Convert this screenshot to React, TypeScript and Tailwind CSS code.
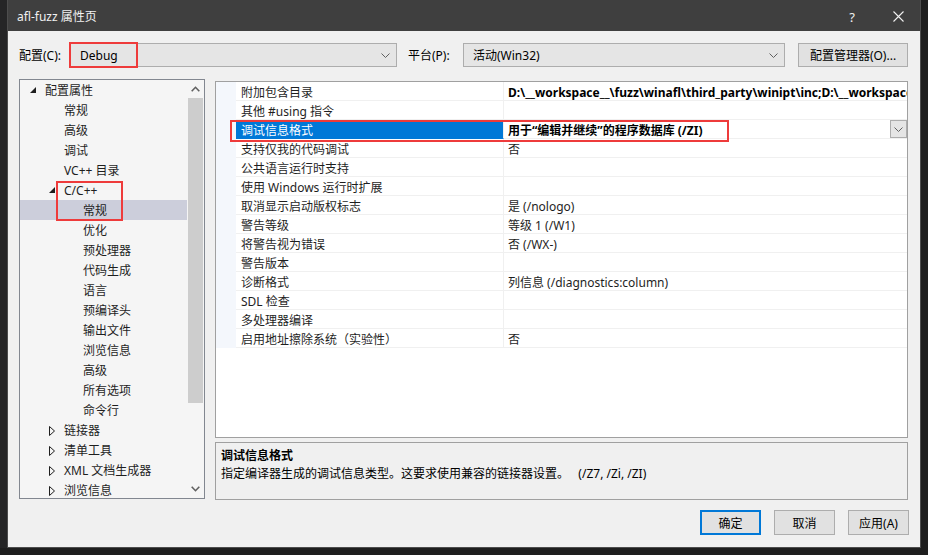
import React from 'react';

type TreeItem = { label: string; level: 0 | 1 | 2; arrow?: 'open' | 'closed'; selected?: boolean };

const tree: TreeItem[] = [
  { label: '配置属性', level: 0, arrow: 'open' },
  { label: '常规', level: 1 },
  { label: '高级', level: 1 },
  { label: '调试', level: 1 },
  { label: 'VC++ 目录', level: 1 },
  { label: 'C/C++', level: 1, arrow: 'open' },
  { label: '常规', level: 2, selected: true },
  { label: '优化', level: 2 },
  { label: '预处理器', level: 2 },
  { label: '代码生成', level: 2 },
  { label: '语言', level: 2 },
  { label: '预编译头', level: 2 },
  { label: '输出文件', level: 2 },
  { label: '浏览信息', level: 2 },
  { label: '高级', level: 2 },
  { label: '所有选项', level: 2 },
  { label: '命令行', level: 2 },
  { label: '链接器', level: 1, arrow: 'closed' },
  { label: '清单工具', level: 1, arrow: 'closed' },
  { label: 'XML 文档生成器', level: 1, arrow: 'closed' },
  { label: '浏览信息', level: 1, arrow: 'closed' },
];

const indent = { 0: 'pl-0', 1: 'pl-[19px]', 2: 'pl-[38px]' };

type Prop = { name: string; value: string; bold?: boolean; selected?: boolean };

const props: Prop[] = [
  { name: '附加包含目录', value: 'D:\\__workspace__\\fuzz\\winafl\\third_party\\winipt\\inc;D:\\__workspace__', bold: true },
  { name: '其他 #using 指令', value: '' },
  { name: '调试信息格式', value: '用于“编辑并继续”的程序数据库 (/ZI)', bold: true, selected: true },
  { name: '支持仅我的代码调试', value: '否' },
  { name: '公共语言运行时支持', value: '' },
  { name: '使用 Windows 运行时扩展', value: '' },
  { name: '取消显示启动版权标志', value: '是 (/nologo)' },
  { name: '警告等级', value: '等级 1 (/W1)' },
  { name: '将警告视为错误', value: '否 (/WX-)' },
  { name: '警告版本', value: '' },
  { name: '诊断格式', value: '列信息 (/diagnostics:column)' },
  { name: 'SDL 检查', value: '' },
  { name: '多处理器编译', value: '' },
  { name: '启用地址擦除系统（实验性）', value: '否' },
];

const Chevron = () => (
  <svg width="9" height="5" viewBox="0 0 9 5">
    <path d="M0.5 0.5 L4.5 4.5 L8.5 0.5" fill="none" stroke="#606060" strokeWidth="1" />
  </svg>
);

const Combo = ({ text, className }: { text: string; className: string }) => (
  <div
    className={`${className} h-[24px] flex items-center justify-between border border-[#adadad] bg-[#e5e5e5] pl-[9px] pr-[6px] text-[12px] text-black`}
  >
    <span className="pt-[2px]">{text}</span>
    <Chevron />
  </div>
);

const Button = ({ label, primary }: { label: string; primary?: boolean }) => (
  <div
    className={`w-[61px] h-[25px] flex items-center justify-center pt-[2px] bg-[#e1e1e1] text-[12px] text-black ${
      primary ? 'border-2 border-[#0078d7]' : 'border border-[#adadad]'
    }`}
  >
    {label}
  </div>
);

export default function App() {
  return (
    <div className="w-[928px] h-[555px] overflow-hidden bg-[#1e1e1e] font-['Noto_Sans','Noto_Sans_CJK_SC',sans-serif] leading-[16px]">
      <div className="flex">
        <div className="w-[7px] h-[548px] bg-[#252526]" />
        <div className="w-[914px] h-[548px] flex flex-col border-x border-b border-[#4d4d4d]">
          {/* title bar */}
          <div className="h-[31px] bg-[#3f3f3f] flex items-center pt-[2px] pl-[9px] pr-[16px] text-[12px] text-[#f1f1f1]">
            <span className="flex-1">afl-fuzz 属性页</span>
            <span className="w-[14px] text-center text-[13px] mr-[34px]">?</span>
            <svg width="11" height="11" viewBox="0 0 11 11">
              <path d="M0.5 0.5 L10.5 10.5 M10.5 0.5 L0.5 10.5" stroke="#f1f1f1" strokeWidth="1.1" />
            </svg>
          </div>

          {/* body */}
          <div className="flex-1 bg-[#f0f0f0] pl-[11px] pr-[11px] pt-[12px] flex flex-col">
            <div className="relative flex items-center h-[24px] text-[12px] text-black">
              <span className="w-[51px] pt-[2px]">配置(C):</span>
              <Combo text="Debug" className="w-[327px]" />
              <span className="w-[55px] ml-[11px] pt-[2px]">平台(P):</span>
              <Combo text="活动(Win32)" className="w-[322px]" />
              <div className="ml-[13px] w-[110px] h-[24px] flex items-center justify-center pt-[2px] bg-[#e1e1e1] border border-[#adadad]">
                配置管理器(O)...
              </div>
              <div className="absolute left-[50px] top-[-1px] w-[69px] h-[26px] border-2 border-[#ee3b3b]" />
            </div>

            <div className="flex mt-[12px] gap-[10px]">
              {/* tree */}
              <div className="relative w-[186px] h-[420px] border border-[#828790] bg-[#f5f5f5] flex overflow-hidden text-[12px] text-[#1e1e1e]">
                <div className="flex-1 flex flex-col">
                  {tree.map((t, i) => (
                    <div
                      key={i}
                      className={`h-[20px] shrink-0 flex items-center ${indent[t.level]} ${t.selected ? 'bg-[#cccedb]' : ''}`}
                    >
                      <div className="w-[25px] h-[20px] flex items-center pl-[10px]">
                        {t.arrow === 'open' && (
                          <svg width="6" height="6" viewBox="0 0 6 6">
                            <path d="M6 0 L6 6 L0 6 Z" fill="#1e1e1e" />
                          </svg>
                        )}
                        {t.arrow === 'closed' && (
                          <svg width="6" height="10" viewBox="0 0 6 10" className="mt-[1px]">
                            <path d="M0.5 0.5 L5.5 5 L0.5 9.5 Z" fill="none" stroke="#1e1e1e" strokeWidth="1" />
                          </svg>
                        )}
                      </div>
                      <span className="whitespace-nowrap pt-[2px]">{t.label}</span>
                    </div>
                  ))}
                </div>
                <div className="w-[16px] mr-[1px] flex flex-col items-center">
                  <div className="h-[18px] flex items-center justify-center">
                    <svg width="9" height="6" viewBox="0 0 9 6">
                      <path d="M0.7 5.3 L4.5 1.3 L8.3 5.3" fill="none" stroke="#606060" strokeWidth="1.6" />
                    </svg>
                  </div>
                  <div className="w-[15px] h-[305px] bg-[#cdcdcd]" />
                  <div className="flex-1" />
                  <div className="h-[18px] flex items-center justify-center">
                    <svg width="9" height="6" viewBox="0 0 9 6">
                      <path d="M0.7 0.7 L4.5 4.7 L8.3 0.7" fill="none" stroke="#606060" strokeWidth="1.6" />
                    </svg>
                  </div>
                </div>
                <div className="absolute left-[36px] top-[101px] w-[67px] h-[40px] border-2 border-[#ee3b3b]" />
              </div>

              {/* right column */}
              <div className="w-[693px] flex flex-col">
                <div className="relative mt-[2px] h-[357px] border border-[#a0a0a0] bg-white flex flex-col overflow-hidden text-[12px] text-[#1e1e1e]">
                  {props.map((p, i) => (
                    <div key={i} className="h-[19px] shrink-0 flex">
                      <div className="w-[20px] bg-[#f4f7fc]" />
                      <div
                        className={`w-[268px] flex items-center pl-[5px] border-b border-r border-[#f0f0f0] whitespace-nowrap ${
                          p.selected ? 'bg-[#0078d7] text-white border-b-[#0078d7]' : ''
                        }`}
                      >
                        <span className="pt-[4px]">{p.name}</span>
                      </div>
                      <div
                        className={`flex-1 min-w-0 flex items-center pl-[4px] border-b border-[#f0f0f0] whitespace-nowrap overflow-hidden ${
                          p.bold ? 'font-bold text-black' : ''
                        }`}
                      >
                        <span className="flex-1 pt-[4px]">{p.value}</span>
                        {p.selected && (
                          <div className="w-[17px] h-[18px] flex items-center justify-center bg-[#e5e5e5] border border-[#adadad]">
                            <Chevron />
                          </div>
                        )}
                      </div>
                    </div>
                  ))}
                  <div className="absolute left-[14px] top-[38px] w-[499px] h-[22px] border-2 border-[#ee3b3b]" />
                </div>

                <div className="mt-[4px] h-[58px] border border-[#a0a0a0] bg-[#f0f0f0] pl-[5px] pt-[4px] text-[12px] text-black leading-[18px]">
                  <div className="font-bold">调试信息格式</div>
                  <div className="whitespace-pre">指定编译器生成的调试信息类型。这要求使用兼容的链接器设置。   (/Z7, /Zi, /ZI)</div>
                </div>
              </div>
            </div>

            <div className="flex justify-end gap-[13px] mt-[10px]">
              <Button label="确定" primary />
              <Button label="取消" />
              <Button label="应用(A)" />
            </div>
          </div>
        </div>
        <div className="flex-1 h-[548px] bg-[#1e1e1e]" />
      </div>
    </div>
  );
}
